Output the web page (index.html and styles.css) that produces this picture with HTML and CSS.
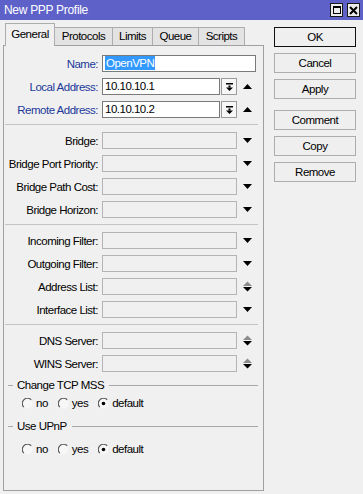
FILE: index.html
```html
<!DOCTYPE html>
<html lang="en">
<head>
    <meta charset="UTF-8">
    <title>New PPP Profile</title>
    <link rel="stylesheet" href="styles.css">
</head>
<body>

    <div class="window">
        <div class="titlebar">
            <span class="title">New PPP Profile</span>
            <span class="tb-btn"><span class="max-box"></span></span>
            <span class="tb-btn">
                <svg width="9" height="9" viewBox="0 0 9 9"><path d="M1 1 L8 8 M8 1 L1 8" stroke="#000" stroke-width="2"/></svg>
            </span>
        </div>

        <div class="main">
            <div class="left">
                <div class="tabs">
                    <div class="tab active">General</div>
                    <div class="tab w-protocols">Protocols</div>
                    <div class="tab w-limits">Limits</div>
                    <div class="tab w-queue">Queue</div>
                    <div class="tab w-scripts">Scripts</div>
                </div>

                <div class="panel">
                    <div class="row">
                        <span class="lbl blue">Name:</span>
                        <div class="field w-full"><span class="sel">OpenVPN</span></div>
                    </div>
                    <div class="row">
                        <span class="lbl blue">Local Address:</span>
                        <div class="field w-dd">10.10.10.1</div>
                        <span class="dd-btn">
                            <svg width="7" height="8" viewBox="0 0 7 8"><rect x="0" y="0" width="7" height="1.5" fill="#000"/><rect x="2.5" y="2.5" width="2" height="2" fill="#000"/><polygon points="0,4.5 7,4.5 3.5,8" fill="#000"/></svg>
                        </span>
                        <span class="arrow"><svg width="9" height="5" viewBox="0 0 9 5"><polygon points="0,5 9,5 4.5,0" fill="#000"/></svg></span>
                    </div>
                    <div class="row">
                        <span class="lbl blue">Remote Address:</span>
                        <div class="field w-dd">10.10.10.2</div>
                        <span class="dd-btn">
                            <svg width="7" height="8" viewBox="0 0 7 8"><rect x="0" y="0" width="7" height="1.5" fill="#000"/><rect x="2.5" y="2.5" width="2" height="2" fill="#000"/><polygon points="0,4.5 7,4.5 3.5,8" fill="#000"/></svg>
                        </span>
                        <span class="arrow"><svg width="9" height="5" viewBox="0 0 9 5"><polygon points="0,5 9,5 4.5,0" fill="#000"/></svg></span>
                    </div>

                    <div class="sep"></div>

                    <div class="row">
                        <span class="lbl">Bridge:</span>
                        <div class="field off w-std"></div>
                        <span class="arrow"><svg width="9" height="5" viewBox="0 0 9 5"><polygon points="0,0 9,0 4.5,5" fill="#000"/></svg></span>
                    </div>
                    <div class="row">
                        <span class="lbl">Bridge Port Priority:</span>
                        <div class="field off w-std"></div>
                        <span class="arrow"><svg width="9" height="5" viewBox="0 0 9 5"><polygon points="0,0 9,0 4.5,5" fill="#000"/></svg></span>
                    </div>
                    <div class="row">
                        <span class="lbl">Bridge Path Cost:</span>
                        <div class="field off w-std"></div>
                        <span class="arrow"><svg width="9" height="5" viewBox="0 0 9 5"><polygon points="0,0 9,0 4.5,5" fill="#000"/></svg></span>
                    </div>
                    <div class="row">
                        <span class="lbl">Bridge Horizon:</span>
                        <div class="field off w-std"></div>
                        <span class="arrow"><svg width="9" height="5" viewBox="0 0 9 5"><polygon points="0,0 9,0 4.5,5" fill="#000"/></svg></span>
                    </div>

                    <div class="sep"></div>

                    <div class="row">
                        <span class="lbl">Incoming Filter:</span>
                        <div class="field off w-std"></div>
                        <span class="arrow"><svg width="9" height="5" viewBox="0 0 9 5"><polygon points="0,0 9,0 4.5,5" fill="#000"/></svg></span>
                    </div>
                    <div class="row">
                        <span class="lbl">Outgoing Filter:</span>
                        <div class="field off w-std"></div>
                        <span class="arrow"><svg width="9" height="5" viewBox="0 0 9 5"><polygon points="0,0 9,0 4.5,5" fill="#000"/></svg></span>
                    </div>
                    <div class="row">
                        <span class="lbl">Address List:</span>
                        <div class="field off w-std"></div>
                        <span class="arrow"><svg width="9" height="11" viewBox="0 0 9 11"><polygon points="0,5 9,5 4.5,0.5" fill="#8c8c8c"/><polygon points="0,6 9,6 4.5,10.5" fill="#000"/></svg></span>
                    </div>
                    <div class="row">
                        <span class="lbl">Interface List:</span>
                        <div class="field off w-std"></div>
                        <span class="arrow"><svg width="9" height="5" viewBox="0 0 9 5"><polygon points="0,0 9,0 4.5,5" fill="#000"/></svg></span>
                    </div>

                    <div class="sep"></div>

                    <div class="row">
                        <span class="lbl">DNS Server:</span>
                        <div class="field off w-std"></div>
                        <span class="arrow"><svg width="9" height="11" viewBox="0 0 9 11"><polygon points="0,5 9,5 4.5,0.5" fill="#8c8c8c"/><polygon points="0,6 9,6 4.5,10.5" fill="#000"/></svg></span>
                    </div>
                    <div class="row">
                        <span class="lbl">WINS Server:</span>
                        <div class="field off w-std"></div>
                        <span class="arrow"><svg width="9" height="11" viewBox="0 0 9 11"><polygon points="0,5 9,5 4.5,0.5" fill="#8c8c8c"/><polygon points="0,6 9,6 4.5,10.5" fill="#000"/></svg></span>
                    </div>

                    <div class="group first">
                        <span class="g-dash"></span>
                        <span class="g-text">Change TCP MSS</span>
                        <span class="g-line"></span>
                    </div>
                    <div class="radios first">
                        <span class="radio"><svg width="11" height="11" viewBox="0 0 11 11"><circle cx="5.5" cy="5.5" r="5" fill="#f7f7f7"/><path d="M9.2 1.8 A5 5 0 0 0 1.8 9.2" fill="none" stroke="#5a5a5a" stroke-width="1.2"/></svg>no</span>
                        <span class="radio"><svg width="11" height="11" viewBox="0 0 11 11"><circle cx="5.5" cy="5.5" r="5" fill="#f7f7f7"/><path d="M9.2 1.8 A5 5 0 0 0 1.8 9.2" fill="none" stroke="#5a5a5a" stroke-width="1.2"/></svg>yes</span>
                        <span class="radio"><svg width="11" height="11" viewBox="0 0 11 11"><circle cx="5.5" cy="5.5" r="5" fill="#f7f7f7"/><path d="M9.2 1.8 A5 5 0 0 0 1.8 9.2" fill="none" stroke="#5a5a5a" stroke-width="1.2"/><circle cx="5.5" cy="5.5" r="1.8" fill="#000"/></svg>default</span>
                    </div>

                    <div class="group second">
                        <span class="g-dash"></span>
                        <span class="g-text">Use UPnP</span>
                        <span class="g-line"></span>
                    </div>
                    <div class="radios">
                        <span class="radio"><svg width="11" height="11" viewBox="0 0 11 11"><circle cx="5.5" cy="5.5" r="5" fill="#f7f7f7"/><path d="M9.2 1.8 A5 5 0 0 0 1.8 9.2" fill="none" stroke="#5a5a5a" stroke-width="1.2"/></svg>no</span>
                        <span class="radio"><svg width="11" height="11" viewBox="0 0 11 11"><circle cx="5.5" cy="5.5" r="5" fill="#f7f7f7"/><path d="M9.2 1.8 A5 5 0 0 0 1.8 9.2" fill="none" stroke="#5a5a5a" stroke-width="1.2"/></svg>yes</span>
                        <span class="radio"><svg width="11" height="11" viewBox="0 0 11 11"><circle cx="5.5" cy="5.5" r="5" fill="#f7f7f7"/><path d="M9.2 1.8 A5 5 0 0 0 1.8 9.2" fill="none" stroke="#5a5a5a" stroke-width="1.2"/><circle cx="5.5" cy="5.5" r="1.8" fill="#000"/></svg>default</span>
                    </div>
                </div>
            </div>

            <div class="buttons">
                <button class="btn default">OK</button>
                <button class="btn">Cancel</button>
                <button class="btn">Apply</button>
                <button class="btn gap">Comment</button>
                <button class="btn">Copy</button>
                <button class="btn">Remove</button>
            </div>
        </div>
    </div>

</body>
</html>
```

FILE: styles.css
```css
* {
    box-sizing: border-box;
}

body {
    margin: 0;
    background-color: #f0f0f0;
    font-family: "Liberation Sans", Arial, sans-serif;
    font-size: 11.5px;
    letter-spacing: -0.5px;
    color: #000;
}

.window {
    width: 363px;
    height: 494px;
    overflow: hidden;
}

/* title bar */
.titlebar {
    height: 20px;
    background-color: #5e62c8;
    color: #fff;
    display: flex;
    align-items: center;
    padding: 0 3px 0 4px;
}

.title {
    flex: 1;
    font-size: 12px;
    letter-spacing: -0.3px;
}

.tb-btn {
    width: 13px;
    height: 14px;
    margin-left: 4px;
    background-color: #ececec;
    border: 1px solid #1a1a1a;
    display: flex;
    align-items: center;
    justify-content: center;
}

.max-box {
    width: 8px;
    height: 8px;
    border: 1px solid #000;
    border-top-width: 2px;
}

/* layout */
.main {
    display: flex;
    padding-left: 3px;
}

.left {
    width: 261px;
}

/* tabs */
.tabs {
    height: 25px;
    display: flex;
    align-items: flex-end;
    padding-left: 2px;
}

.tab {
    height: 18px;
    background-color: #e3e3e3;
    border-top: 1px solid #adadad;
    border-right: 1px solid #adadad;
    text-align: center;
    line-height: 17px;
}

.tab.active {
    width: 50px;
    height: 23px;
    line-height: 20px;
    background-color: #f0f0f0;
    border-left: 1px solid #adadad;
    margin-bottom: -1px;
    position: relative;
    z-index: 1;
}

.w-protocols { width: 58px; }
.w-limits { width: 40px; }
.w-queue { width: 46px; }
.w-scripts { width: 46px; }

.panel {
    height: 446px;
    border: 1px solid #a0a0a0;
    padding-top: 9px;
}

/* form rows */
.row {
    display: flex;
    align-items: center;
    height: 17px;
    margin-bottom: 6px;
}

.lbl {
    width: 94px;
    margin-right: 4px;
    text-align: right;
    white-space: nowrap;
}

.blue {
    color: #22399a;
}

.field {
    height: 17px;
    background-color: #fff;
    border: 1px solid #7a7a7a;
    padding-left: 2px;
    line-height: 15px;
    white-space: nowrap;
}

.field.off {
    background-color: #f0f0f0;
    border-color: #b4b4b4;
}

.w-full { width: 154px; }
.w-dd { width: 118px; }
.w-std { width: 135px; }

.sel {
    background-color: #3399ff;
    color: #fff;
    padding: 1px 1px;
}

.dd-btn {
    width: 16px;
    height: 17px;
    margin-left: 1px;
    background-color: #f7f7f7;
    border: 1px solid #9a9a9a;
    display: flex;
    align-items: center;
    justify-content: center;
}

.arrow {
    width: 20px;
    display: flex;
    justify-content: center;
}

.sep {
    height: 1px;
    background-color: #c4c4c4;
    margin: 1px 5px 7px 1px;
}

/* radio groups */
.group {
    display: flex;
    align-items: center;
    height: 14px;
}

.group.first {
    margin-top: 2px;
}

.group.second {
    margin-top: 9px;
}

.g-dash {
    width: 5px;
    height: 1px;
    margin-left: 4px;
    margin-right: 4px;
    background-color: #a8a8a8;
}

.g-line {
    flex: 1;
    height: 1px;
    margin-left: 5px;
    margin-right: 5px;
    background-color: #a8a8a8;
}

.radios {
    display: flex;
    align-items: center;
    height: 14px;
    margin-top: 9px;
    padding-left: 18px;
}

.radios.first {
    margin-top: 4px;
}

.radio {
    display: flex;
    align-items: center;
    margin-right: 10px;
}

.radio svg {
    margin-right: 3px;
}

/* buttons */
.buttons {
    margin-left: 10px;
    padding-top: 7px;
    display: flex;
    flex-direction: column;
}

.btn {
    width: 82px;
    height: 20px;
    margin-bottom: 6px;
    padding: 0;
    font-family: inherit;
    font-size: 11.5px;
    letter-spacing: inherit;
    color: #000;
    background-color: #efefef;
    border: 1px solid #adadad;
}

.btn.default {
    border-color: #111;
}

.btn.gap {
    margin-top: 5px;
}
```
